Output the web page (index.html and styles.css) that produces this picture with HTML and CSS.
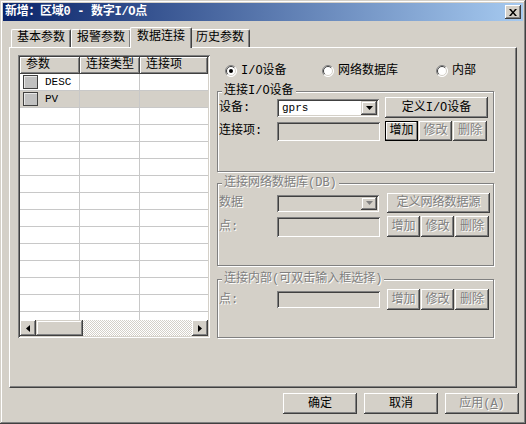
FILE: index.html
```html
<!DOCTYPE html>
<html lang="zh">
<head>
<meta charset="utf-8">
<title>新增</title>
<link rel="stylesheet" href="styles.css">
</head>
<body>
<div class="window">
  <div class="titlebar">
    <span class="title">新增：区域0 - 数字I/O点</span>
    <span class="close"><svg width="8" height="7" viewBox="0 0 8 7"><path d="M0 0h2l2 2.5L6 0h2L5 3.5 8 7H6L4 4.5 2 7H0l3-3.5z" fill="#000"/></svg></span>
  </div>
  <div class="tabs">
    <div class="tab">基本参数</div>
    <div class="tab">报警参数</div>
    <div class="tab active">数据连接</div>
    <div class="tab">历史参数</div>
  </div>
  <div class="panel">
    <div class="grid">
      <div class="grid-head">
        <div class="hcell c1">参数</div>
        <div class="hcell c2">连接类型</div>
        <div class="hcell c3">连接项</div>
      </div>
      <div class="grid-body">
        <div class="row"><div class="cell c1"><span class="chk"></span><span class="code">DESC</span></div><div class="cell c2"></div><div class="cell c3"></div></div>
        <div class="row sel"><div class="cell c1"><span class="chk"></span><span class="code">PV</span></div><div class="cell c2"></div><div class="cell c3"></div></div>
        <div class="row"><div class="cell c1"></div><div class="cell c2"></div><div class="cell c3"></div></div>
        <div class="row"><div class="cell c1"></div><div class="cell c2"></div><div class="cell c3"></div></div>
        <div class="row"><div class="cell c1"></div><div class="cell c2"></div><div class="cell c3"></div></div>
        <div class="row"><div class="cell c1"></div><div class="cell c2"></div><div class="cell c3"></div></div>
        <div class="row"><div class="cell c1"></div><div class="cell c2"></div><div class="cell c3"></div></div>
        <div class="row"><div class="cell c1"></div><div class="cell c2"></div><div class="cell c3"></div></div>
        <div class="row"><div class="cell c1"></div><div class="cell c2"></div><div class="cell c3"></div></div>
        <div class="row"><div class="cell c1"></div><div class="cell c2"></div><div class="cell c3"></div></div>
        <div class="row"><div class="cell c1"></div><div class="cell c2"></div><div class="cell c3"></div></div>
        <div class="row"><div class="cell c1"></div><div class="cell c2"></div><div class="cell c3"></div></div>
        <div class="row"><div class="cell c1"></div><div class="cell c2"></div><div class="cell c3"></div></div>
        <div class="row"><div class="cell c1"></div><div class="cell c2"></div><div class="cell c3"></div></div>
        <div class="row"><div class="cell c1"></div><div class="cell c2"></div><div class="cell c3"></div></div>
      </div>
      <div class="hscroll">
        <span class="sbtn"><svg width="4" height="7" viewBox="0 0 4 7"><path d="M4 0v7L0 3.5z" fill="#000"/></svg></span>
        <span class="thumb"></span>
        <span class="track"></span>
        <span class="sbtn"><svg width="4" height="7" viewBox="0 0 4 7"><path d="M0 0v7l4-3.5z" fill="#000"/></svg></span>
      </div>
    </div>

    <div class="right">
      <div class="radios">
        <label class="radio"><svg width="12" height="12" viewBox="0 0 12 12"><circle cx="6" cy="6" r="5.5" fill="#fff"/><path d="M2.1 9.9A5.5 5.5 0 0 1 9.9 2.1" fill="none" stroke="#808080"/><path d="M2.8 9.2A4.5 4.5 0 0 1 9.2 2.8" fill="none" stroke="#404040"/><path d="M9.9 2.1A5.5 5.5 0 0 1 2.1 9.9" fill="none" stroke="#fff"/><path d="M9.2 2.8A4.5 4.5 0 0 1 2.8 9.2" fill="none" stroke="#D4D0C8"/><circle cx="6" cy="6" r="2" fill="#000"/></svg><span>I/O设备</span></label>
        <label class="radio"><svg width="12" height="12" viewBox="0 0 12 12"><circle cx="6" cy="6" r="5.5" fill="#fff"/><path d="M2.1 9.9A5.5 5.5 0 0 1 9.9 2.1" fill="none" stroke="#808080"/><path d="M2.8 9.2A4.5 4.5 0 0 1 9.2 2.8" fill="none" stroke="#404040"/><path d="M9.9 2.1A5.5 5.5 0 0 1 2.1 9.9" fill="none" stroke="#fff"/><path d="M9.2 2.8A4.5 4.5 0 0 1 2.8 9.2" fill="none" stroke="#D4D0C8"/></svg><span>网络数据库</span></label>
        <label class="radio"><svg width="12" height="12" viewBox="0 0 12 12"><circle cx="6" cy="6" r="5.5" fill="#fff"/><path d="M2.1 9.9A5.5 5.5 0 0 1 9.9 2.1" fill="none" stroke="#808080"/><path d="M2.8 9.2A4.5 4.5 0 0 1 9.2 2.8" fill="none" stroke="#404040"/><path d="M9.9 2.1A5.5 5.5 0 0 1 2.1 9.9" fill="none" stroke="#fff"/><path d="M9.2 2.8A4.5 4.5 0 0 1 2.8 9.2" fill="none" stroke="#D4D0C8"/></svg><span>内部</span></label>
      </div>

      <fieldset class="group g1">
        <legend>连接I/O设备</legend>
        <div class="fields">
          <span class="lbl">设备:</span>
          <div class="select"><span class="val">gprs</span><span class="drop"><svg width="7" height="4" viewBox="0 0 7 4"><path d="M0 0h7L3.5 4z" fill="#000"/></svg></span></div>
          <div class="btn big">定义I/O设备</div>
          <span class="lbl">连接项:</span>
          <div class="input"></div>
          <div class="btnrow"><div class="btn small def">增加</div><div class="btn small dis">修改</div><div class="btn small dis">删除</div></div>
        </div>
      </fieldset>

      <fieldset class="group g2 off">
        <legend>连接网络数据库(DB)</legend>
        <div class="fields">
          <span class="lbl">数据</span>
          <div class="select disabled"><span class="val"></span><span class="drop"><svg width="7" height="4" viewBox="0 0 7 4"><path d="M0 0h7L3.5 4z" fill="#808080"/></svg></span></div>
          <div class="btn big dis">定义网络数据源</div>
          <span class="lbl">点:</span>
          <div class="input tall"></div>
          <div class="btnrow"><div class="btn small dis">增加</div><div class="btn small dis">修改</div><div class="btn small dis">删除</div></div>
        </div>
      </fieldset>

      <fieldset class="group g3 off">
        <legend>连接内部(可双击输入框选择)</legend>
        <div class="fields">
          <span class="lbl">点:</span>
          <div class="input short"></div>
          <div class="btnrow"><div class="btn small dis">增加</div><div class="btn small dis">修改</div><div class="btn small dis">删除</div></div>
        </div>
      </fieldset>
    </div>
  </div>
  <div class="footer">
    <div class="btn foot">确定</div>
    <div class="btn foot">取消</div>
    <div class="btn foot dis">应用(<u>A</u>)</div>
  </div>
</div>
</body>
</html>
```

FILE: styles.css
```css
* { box-sizing: border-box; }
html, body { margin: 0; padding: 0; }
body {
  width: 526px;
  height: 424px;
  overflow: hidden;
  background: #D4D0C8;
  font-family: "Liberation Mono", "Noto Sans CJK SC", monospace;
  font-size: 12px;
  color: #000;
}
.window {
  width: 526px;
  height: 424px;
  padding: 3px;
  background: #D4D0C8;
  box-shadow: inset -1px -1px #404040, inset 1px 1px #D4D0C8, inset -2px -2px #808080, inset 2px 2px #fff;
  display: flex;
  flex-direction: column;
}
.titlebar {
  height: 18px;
  flex: none;
  background: linear-gradient(to right, #0A246A, #A6CAF0);
  display: flex;
  align-items: center;
  justify-content: space-between;
  padding: 0 2px 0 2px;
}
.title {
  color: #fff;
  font-weight: bold;
  font-size: 12px;
  line-height: 14px;
  font-family: "Liberation Mono", "Noto Sans CJK SC", monospace;
  letter-spacing: -0.3px;
}
.close {
  width: 16px;
  height: 14px;
  background: #D4D0C8;
  box-shadow: inset -1px -1px #404040, inset 1px 1px #fff, inset -2px -2px #808080, inset 2px 2px #D4D0C8;
  display: flex;
  align-items: center;
  justify-content: center;
}
.close svg { display: block; }

/* tabs */
.tabs {
  display: flex;
  align-items: flex-end;
  height: 21px;
  margin: 6px 0 0 8px;
  flex: none;
  z-index: 2;
}
.tab {
  height: 18px;
  margin-bottom: 1px;
  padding: 0 5px;
  line-height: 16px;
  background: #D4D0C8;
  border-top: 1px solid #fff;
  border-left: 1px solid #fff;
  border-right: 1px solid #404040;
  box-shadow: inset -1px 0 #808080;
  border-radius: 2px 2px 0 0;
  white-space: nowrap;
}
.tab.active {
  height: 21px;
  margin: 0 -2px 0 -1px;
  padding: 0 6px;
  line-height: 18px;
  z-index: 3;
}

/* panel */
.panel {
  margin: -1px 6px 0;
  height: 341px;
  flex: none;
  z-index: 1;
  background: #D4D0C8;
  border-top: 1px solid #fff;
  border-left: 1px solid #fff;
  border-right: 1px solid #404040;
  border-bottom: 1px solid #404040;
  box-shadow: inset -1px -1px #808080;
  display: flex;
  align-items: flex-start;
  padding: 7px 0 0 8px;
  gap: 7px;
}

/* grid */
.grid {
  width: 192px;
  height: 283px;
  flex: none;
  display: flex;
  flex-direction: column;
  padding: 2px;
  background: #fff;
  box-shadow: inset 1px 1px #808080, inset -1px -1px #fff, inset 2px 2px #404040, inset -2px -2px #D4D0C8;
}
.grid-head { display: flex; height: 17px; flex: none; }
.hcell {
  height: 17px;
  line-height: 16px;
  padding-left: 6px;
  background: #D4D0C8;
  box-shadow: inset -1px -1px #404040, inset 1px 1px #fff, inset -2px -2px #808080;
  white-space: nowrap;
  overflow: hidden;
}
.c1 { width: 60px; flex: none; }
.c2 { width: 60px; flex: none; }
.c3 { width: 68px; flex: none; }
.grid-body { flex: 1; overflow: hidden; background: #fff; }
.row { display: flex; height: 17px; }
.row.sel { background: #D4D0C8; }
.cell {
  height: 17px;
  border-bottom: 1px solid #C8C8C8;
  border-right: 1px solid #C8C8C8;
  display: flex;
  align-items: center;
}
.cell.c3 { border-right: none; }
.chk {
  width: 15px;
  height: 14px;
  margin: 0 7px 0 3px;
  background: #C0C0C0;
  border: 1px solid #404040;
  box-shadow: inset 1px 1px #E8E8E8;
}
.code { font-size: 11px; line-height: 14px; }
.hscroll { display: flex; height: 16px; flex: none; }
.sbtn {
  width: 16px;
  height: 16px;
  background: #D4D0C8;
  box-shadow: inset -1px -1px #404040, inset 1px 1px #fff, inset -2px -2px #808080, inset 2px 2px #D4D0C8;
  display: flex;
  align-items: center;
  justify-content: center;
}
.thumb {
  width: 47px;
  height: 16px;
  background: #D4D0C8;
  box-shadow: inset -1px -1px #404040, inset 1px 1px #D4D0C8, inset -2px -2px #808080, inset 2px 2px #fff;
}
.track {
  flex: 1;
  height: 16px;
  background-color: #fff;
  background-image: repeating-conic-gradient(#D4D0C8 0 25%, #fff 0 50%);
  background-size: 2px 2px;
}

/* right column */
.right { width: 276px; flex: none; padding-top: 9px; }
.radios {
  display: grid;
  grid-template-columns: 97px 114px auto;
  height: 14px;
  padding-left: 8px;
  align-items: center;
}
.radio { display: flex; align-items: center; gap: 4px; line-height: 14px; white-space: nowrap; }
.radio svg { display: block; flex: none; }

.group {
  margin: 7px 0 0;
  padding: 0 0 30px 1px;
  width: 277px;
  min-width: 0;
  border: 1px solid #808080;
  box-shadow: inset 1px 1px #fff, 1px 1px #fff;
}
.group legend {
  padding: 0 2px;
  margin-left: 3px;
  line-height: 12px;
  font-size: 12px;
  background: #D4D0C8;
}
.g2 { margin-top: 5px; padding: 4px 0 28px 1px; }
.g3 { margin-top: 7px; padding: 4px 0 27px 1px; }
.off legend, .off .lbl { color: #808080; text-shadow: 1px 1px #fff; }

.fields {
  display: grid;
  grid-template-columns: 53px 103px auto;
  grid-template-rows: 21px 20px;
  column-gap: 5px;
  row-gap: 3px;
  align-items: center;
}
.g2 .fields { grid-template-columns: 51px 103px auto; grid-template-rows: 20px 21px; column-gap: 7px; }
.g3 .fields { grid-template-columns: 51px 103px auto; grid-template-rows: 21px; column-gap: 7px; }
.lbl { line-height: 14px; white-space: nowrap; }

.select {
  width: 102px;
  height: 18px;
  background: #fff;
  box-shadow: inset 1px 1px #808080, inset -1px -1px #fff, inset 2px 2px #404040, inset -2px -2px #D4D0C8;
  display: flex;
  align-items: center;
  justify-content: space-between;
  padding: 2px;
}
.select.disabled { background: #D4D0C8; height: 17px; }
.val { padding-left: 3px; font-size: 11px; line-height: 14px; }
.drop {
  width: 16px;
  height: 14px;
  background: #D4D0C8;
  box-shadow: inset -1px -1px #404040, inset 1px 1px #D4D0C8, inset -2px -2px #808080, inset 2px 2px #fff;
  display: flex;
  align-items: center;
  justify-content: center;
}
.drop svg { display: block; }
.select.disabled .drop { height: 13px; }

.input {
  width: 103px;
  height: 19px;
  background: #D4D0C8;
  box-shadow: inset 1px 1px #808080, inset -1px -1px #fff, inset 2px 2px #404040, inset -2px -2px #D4D0C8;
}
.input.tall { height: 20px; }
.input.short { height: 17px; }

.btn {
  background: #D4D0C8;
  box-shadow: inset -1px -1px #404040, inset 1px 1px #fff, inset -2px -2px #808080, inset 2px 2px #D4D0C8;
  display: flex;
  align-items: center;
  justify-content: center;
  line-height: 14px;
  white-space: nowrap;
}
.btn.big { width: 103px; height: 100%; }
.btnrow { display: flex; gap: 1px; height: 100%; }
.btn.small { width: 33px; height: 100%; }
.btnrow .btn.small:last-child { width: 34px; }
.btn.def {
  border: 1px solid #000;
  box-shadow: inset -1px -1px #808080, inset 1px 1px #fff;
}
.btn.dis { color: #808080; text-shadow: 1px 1px #fff; }
.btn.dis u { text-decoration-color: #808080; }

.footer {
  display: flex;
  justify-content: flex-end;
  gap: 7px;
  margin-top: 5px;
  padding-right: 4px;
}
.btn.foot { width: 74px; height: 21px; }
```
